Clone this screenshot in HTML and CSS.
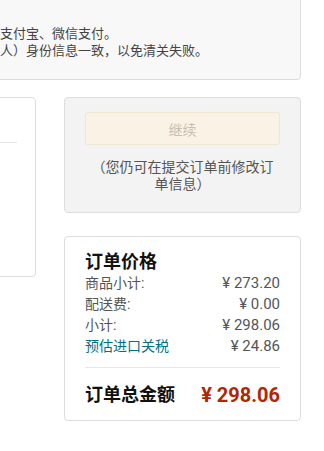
FILE: index.html
```html
<!DOCTYPE html>
<html>
	<head>
		<meta charset="utf-8">
		<title>结算</title>
		<meta name="viewport" content="width=device-width, initial-scale=1">
		<link rel="stylesheet" href="styles.css">
	</head>
	<body>
	<div id="page">
		<div class="notice">
			<p>支付宝、微信支付。</p>
			<p>人）身份信息一致，以免清关失败。</p>
		</div>
		<div class="columns">
			<div class="left-col">
				<div class="address-box">
					<div class="address-line"></div>
				</div>
			</div>
			<div class="right-col">
				<div class="continue-box">
					<button class="continue-btn" disabled>继续</button>
					<p class="continue-tip">（您仍可在提交订单前修改订单信息）</p>
				</div>
				<div class="price-box">
					<h2>订单价格</h2>
					<div class="price-row"><span>商品小计:</span><span class="amount">¥ 273.20</span></div>
					<div class="price-row"><span>配送费:</span><span class="amount">¥ 0.00</span></div>
					<div class="price-row"><span>小计:</span><span class="amount">¥ 298.06</span></div>
					<div class="price-row"><a href="#" class="tax-link">预估进口关税</a><span class="amount">¥ 24.86</span></div>
					<div class="price-divider"></div>
					<div class="total-row"><span>订单总金额</span><span class="total-amount">¥ 298.06</span></div>
				</div>
			</div>
		</div>
	</div>
	</body>
</html>
```

FILE: styles.css
```css
body{
	margin:0;
	background-color:#fff;
	color:#555;
	font-family: Roboto, "Noto Sans CJK SC", sans-serif;
	overflow:hidden;
}
#page{
	width:601px;
	margin:-20px 0 0 -300px;
}
.notice{
	background-color:#f8f8f8;
	border:1px solid #ddd;
	border-radius:4px;
	padding:44px 20px 20px 299px;
	font-size:13px;
	line-height:17px;
	color:#444;
}
.notice p{
	margin:0;
	white-space:nowrap;
}
.columns{
	display:flex;
	align-items:flex-start;
	gap:28px;
	margin-top:17px;
}
.left-col{
	width:336px;
	flex-shrink:0;
}
.address-box{
	height:178px;
	background-color:#fff;
	border:1px solid #ddd;
	border-radius:4px;
	padding:0 18px 0 20px;
}
.address-line{
	height:44px;
	border-bottom:1px solid #e7e7e7;
}
.right-col{
	width:237px;
	flex-shrink:0;
}
.continue-box{
	background-color:#f3f3f3;
	border:1px solid #ddd;
	border-radius:4px;
	padding:14px 20px 19px;
	text-align:center;
}
.continue-btn{
	display:block;
	width:100%;
	height:33px;
	background-color:#faf3e5;
	border:1px solid #efe6d2;
	border-radius:3px;
	color:#c6bfb2;
	font-family: Roboto, "Noto Sans CJK SC", sans-serif;
	font-size:14px;
}
.continue-tip{
	margin:14px 0 0;
	font-size:14px;
	line-height:17px;
	color:#555;
}
.price-box{
	margin-top:23px;
	background-color:#fff;
	border:1px solid #ddd;
	border-radius:4px;
	padding:14px 20px 11px;
}
.price-box h2{
	margin:0;
	font-size:18px;
	line-height:22px;
	font-weight:bold;
	color:#111;
}
.price-row{
	display:flex;
	justify-content:space-between;
	font-size:14px;
	line-height:21px;
	color:#555;
}
.amount{
	font-size:15px;
}
.tax-link{
	color:#007185;
	text-decoration:none;
}
.price-divider{
	margin-top:10px;
	border-top:1px solid #e7e7e7;
}
.total-row{
	display:flex;
	justify-content:space-between;
	padding-top:13px;
	font-size:18px;
	line-height:28px;
	font-weight:bold;
	color:#111;
}
.total-amount{
	font-size:20px;
	color:#b12704;
}
```
